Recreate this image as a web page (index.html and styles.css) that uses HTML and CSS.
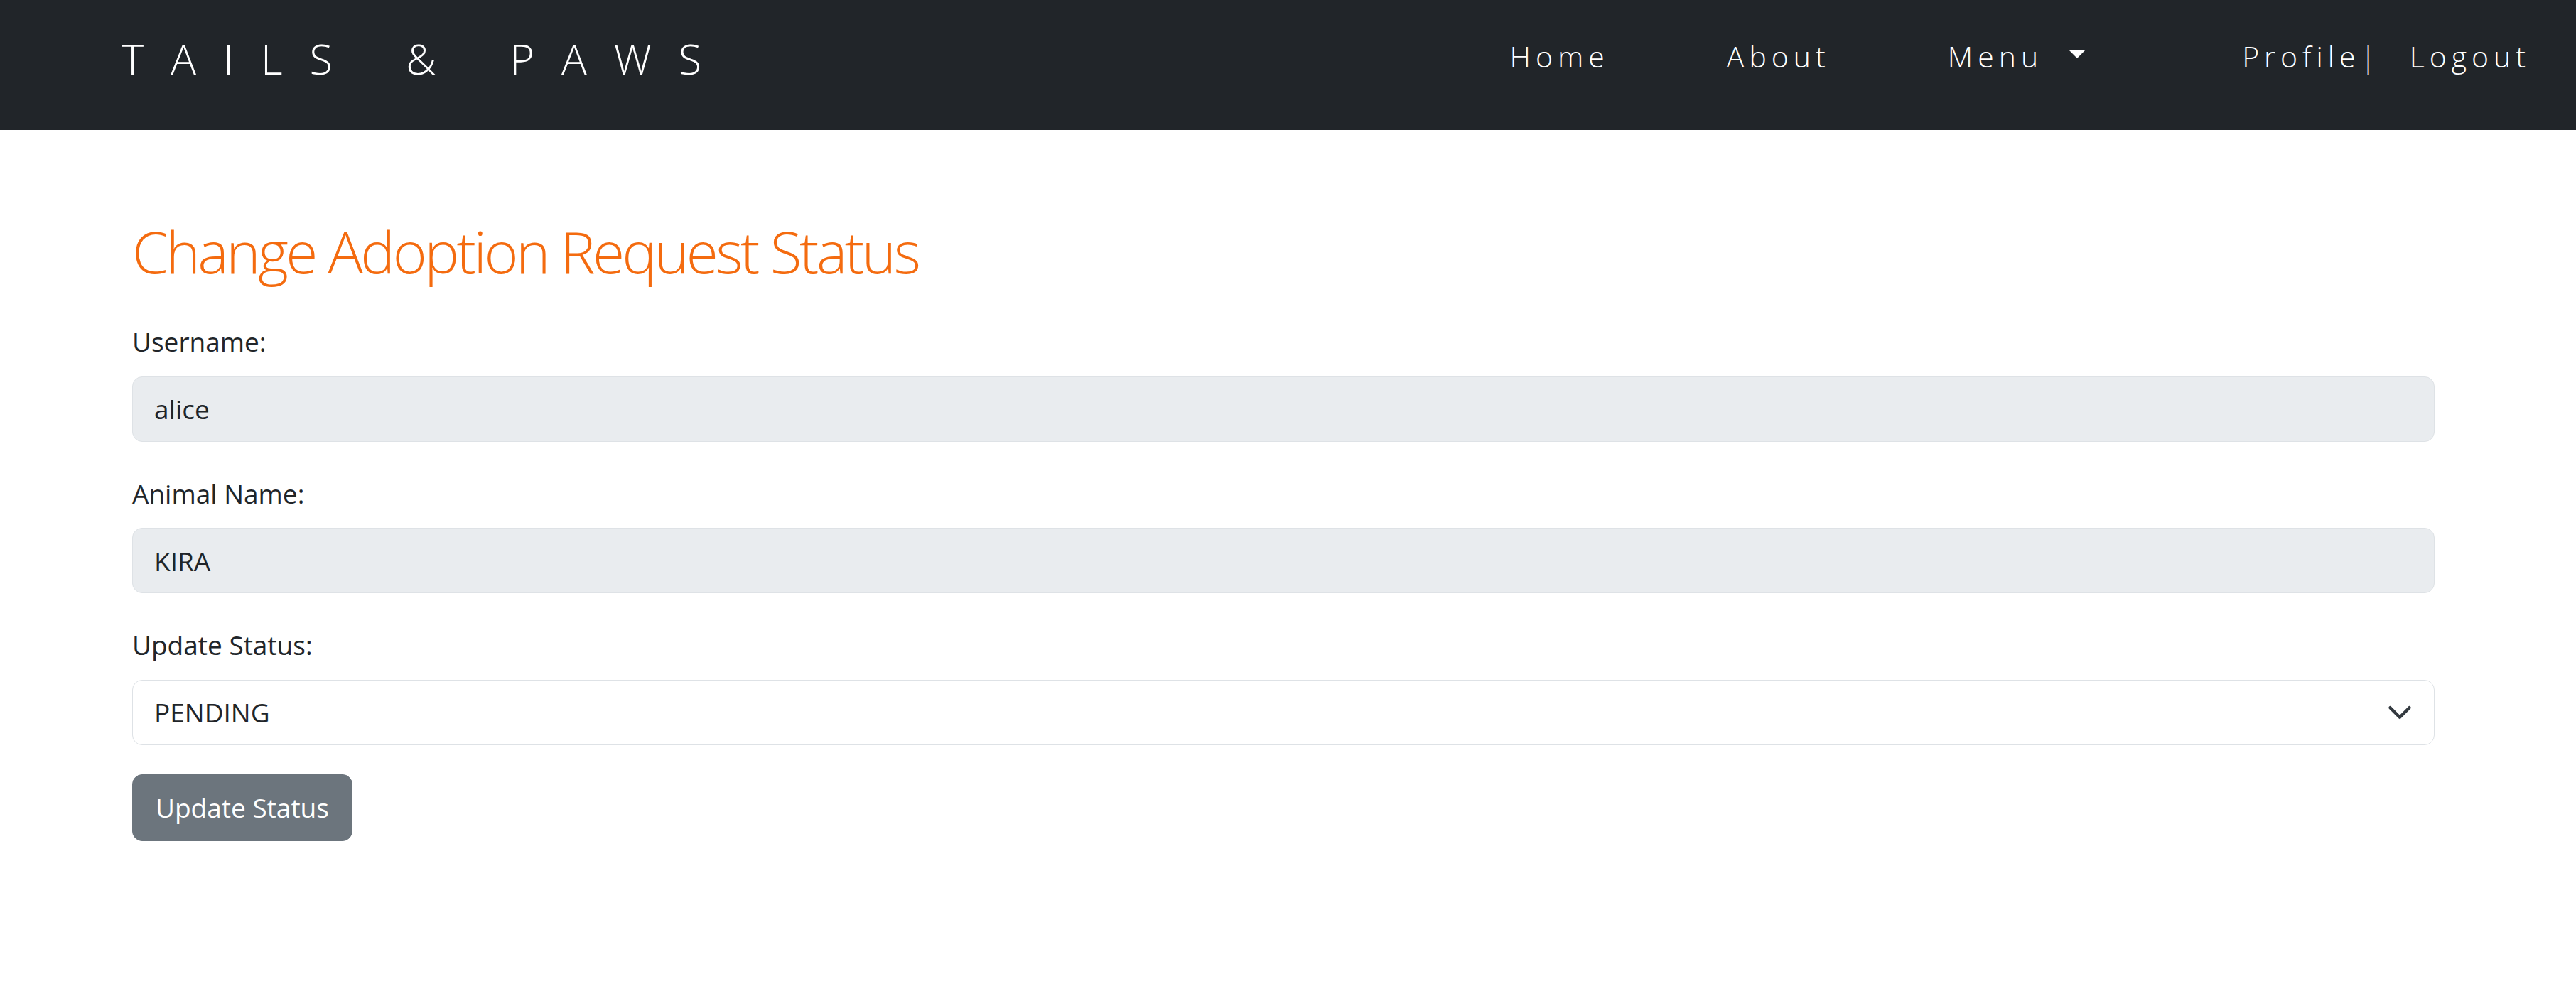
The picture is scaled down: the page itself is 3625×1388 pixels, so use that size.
FILE: index.html
```html
<!DOCTYPE html>
<html lang="en">
<head>
<meta charset="utf-8">
<title>Change Adoption Request Status</title>
<link rel="stylesheet" href="styles.css">
</head>
<body>
<nav class="navbar">
  <a class="brand" href="#">TAILS &amp; PAWS</a>
  <ul class="nav-links">
    <li><a class="nav-link" href="#">Home</a></li>
    <li><a class="nav-link" href="#">About</a></li>
    <li><a class="nav-link dropdown-toggle" href="#">Menu<span class="caret"></span></a></li>
  </ul>
  <div class="auth">
    <a class="nav-link" href="#">Profile|</a>
    <a class="nav-link" href="#">Logout</a>
  </div>
</nav>
<main class="container">
  <h2 class="title">Change Adoption Request Status</h2>
  <form class="form">
    <div class="group">
      <label class="label">Username:</label>
      <div class="control disabled">alice</div>
    </div>
    <div class="group">
      <label class="label">Animal Name:</label>
      <div class="control disabled">KIRA</div>
    </div>
    <div class="group last">
      <label class="label">Update Status:</label>
      <div class="control select">
        <span>PENDING</span>
        <svg class="chevron" viewBox="0 0 16 16" width="36" height="36"><path d="m2 5 6 6 6-6" fill="none" stroke="#343a40" stroke-width="2" stroke-linecap="round" stroke-linejoin="round"/></svg>
      </div>
    </div>
    <button type="button" class="btn">Update Status</button>
  </form>
</main>
</body>
</html>
```
FILE: styles.css
```css
* { box-sizing: border-box; }
html, body { margin: 0; padding: 0; }
body {
  font-family: "Open Sans", "Noto Sans", sans-serif;
  font-size: 37px;
  line-height: 1.5;
  color: #212529;
  background: #fff;
}
a { text-decoration: none; color: inherit; }

.navbar {
  height: 183px;
  background: #212529;
  display: flex;
  align-items: center;
  padding: 0 0 20px 171px;
  color: #fff;
}
.brand {
  font-size: 59.5px;
  font-weight: 300;
  letter-spacing: 38px;
  word-spacing: 12px;
  color: #fff;
  white-space: pre;
}
.nav-links {
  list-style: none;
  margin: 0 0 0 auto;
  padding: 0;
  display: flex;
  gap: 165px;
}
.nav-link {
  font-size: 41px;
  font-weight: 300;
  letter-spacing: 7px;
  color: #fff;
  display: block;
  padding-bottom: 3px;
}
.dropdown-toggle { display: flex; align-items: center; }
.caret {
  display: inline-block;
  margin-left: 36px;
  margin-top: -8px;
  border-top: 12px solid #fff;
  border-left: 12px solid transparent;
  border-right: 12px solid transparent;
}
.auth {
  display: flex;
  gap: 40px;
  margin-left: 220px;
  margin-right: 64px;
}

.container {
  width: 3240px;
  margin-left: 186px;
  padding-top: 121px;
}
.title {
  margin: 0 0 51px;
  font-size: 82px;
  font-weight: 300;
  line-height: 1.2;
  letter-spacing: -3.5px;
  color: #f46b0f;
}
.group { margin-bottom: 45px; }
.group.last { margin-bottom: 41px; }
.label {
  display: block;
  margin-bottom: 21px;
}
.control {
  height: 92px;
  border: 1px solid #dee2e6;
  border-radius: 14px;
  padding: 0 30px;
  display: flex;
  align-items: center;
}
.disabled { background: #e9ecef; }
.select {
  background: #fff;
  justify-content: space-between;
  padding-right: 30px;
}
.chevron { display: block; }
.btn {
  height: 94px;
  padding: 0 32px;
  font-family: inherit;
  font-size: 37px;
  line-height: 1.5;
  color: #fff;
  background: #6c757d;
  border: 1px solid #6c757d;
  border-radius: 14px;
}
```
